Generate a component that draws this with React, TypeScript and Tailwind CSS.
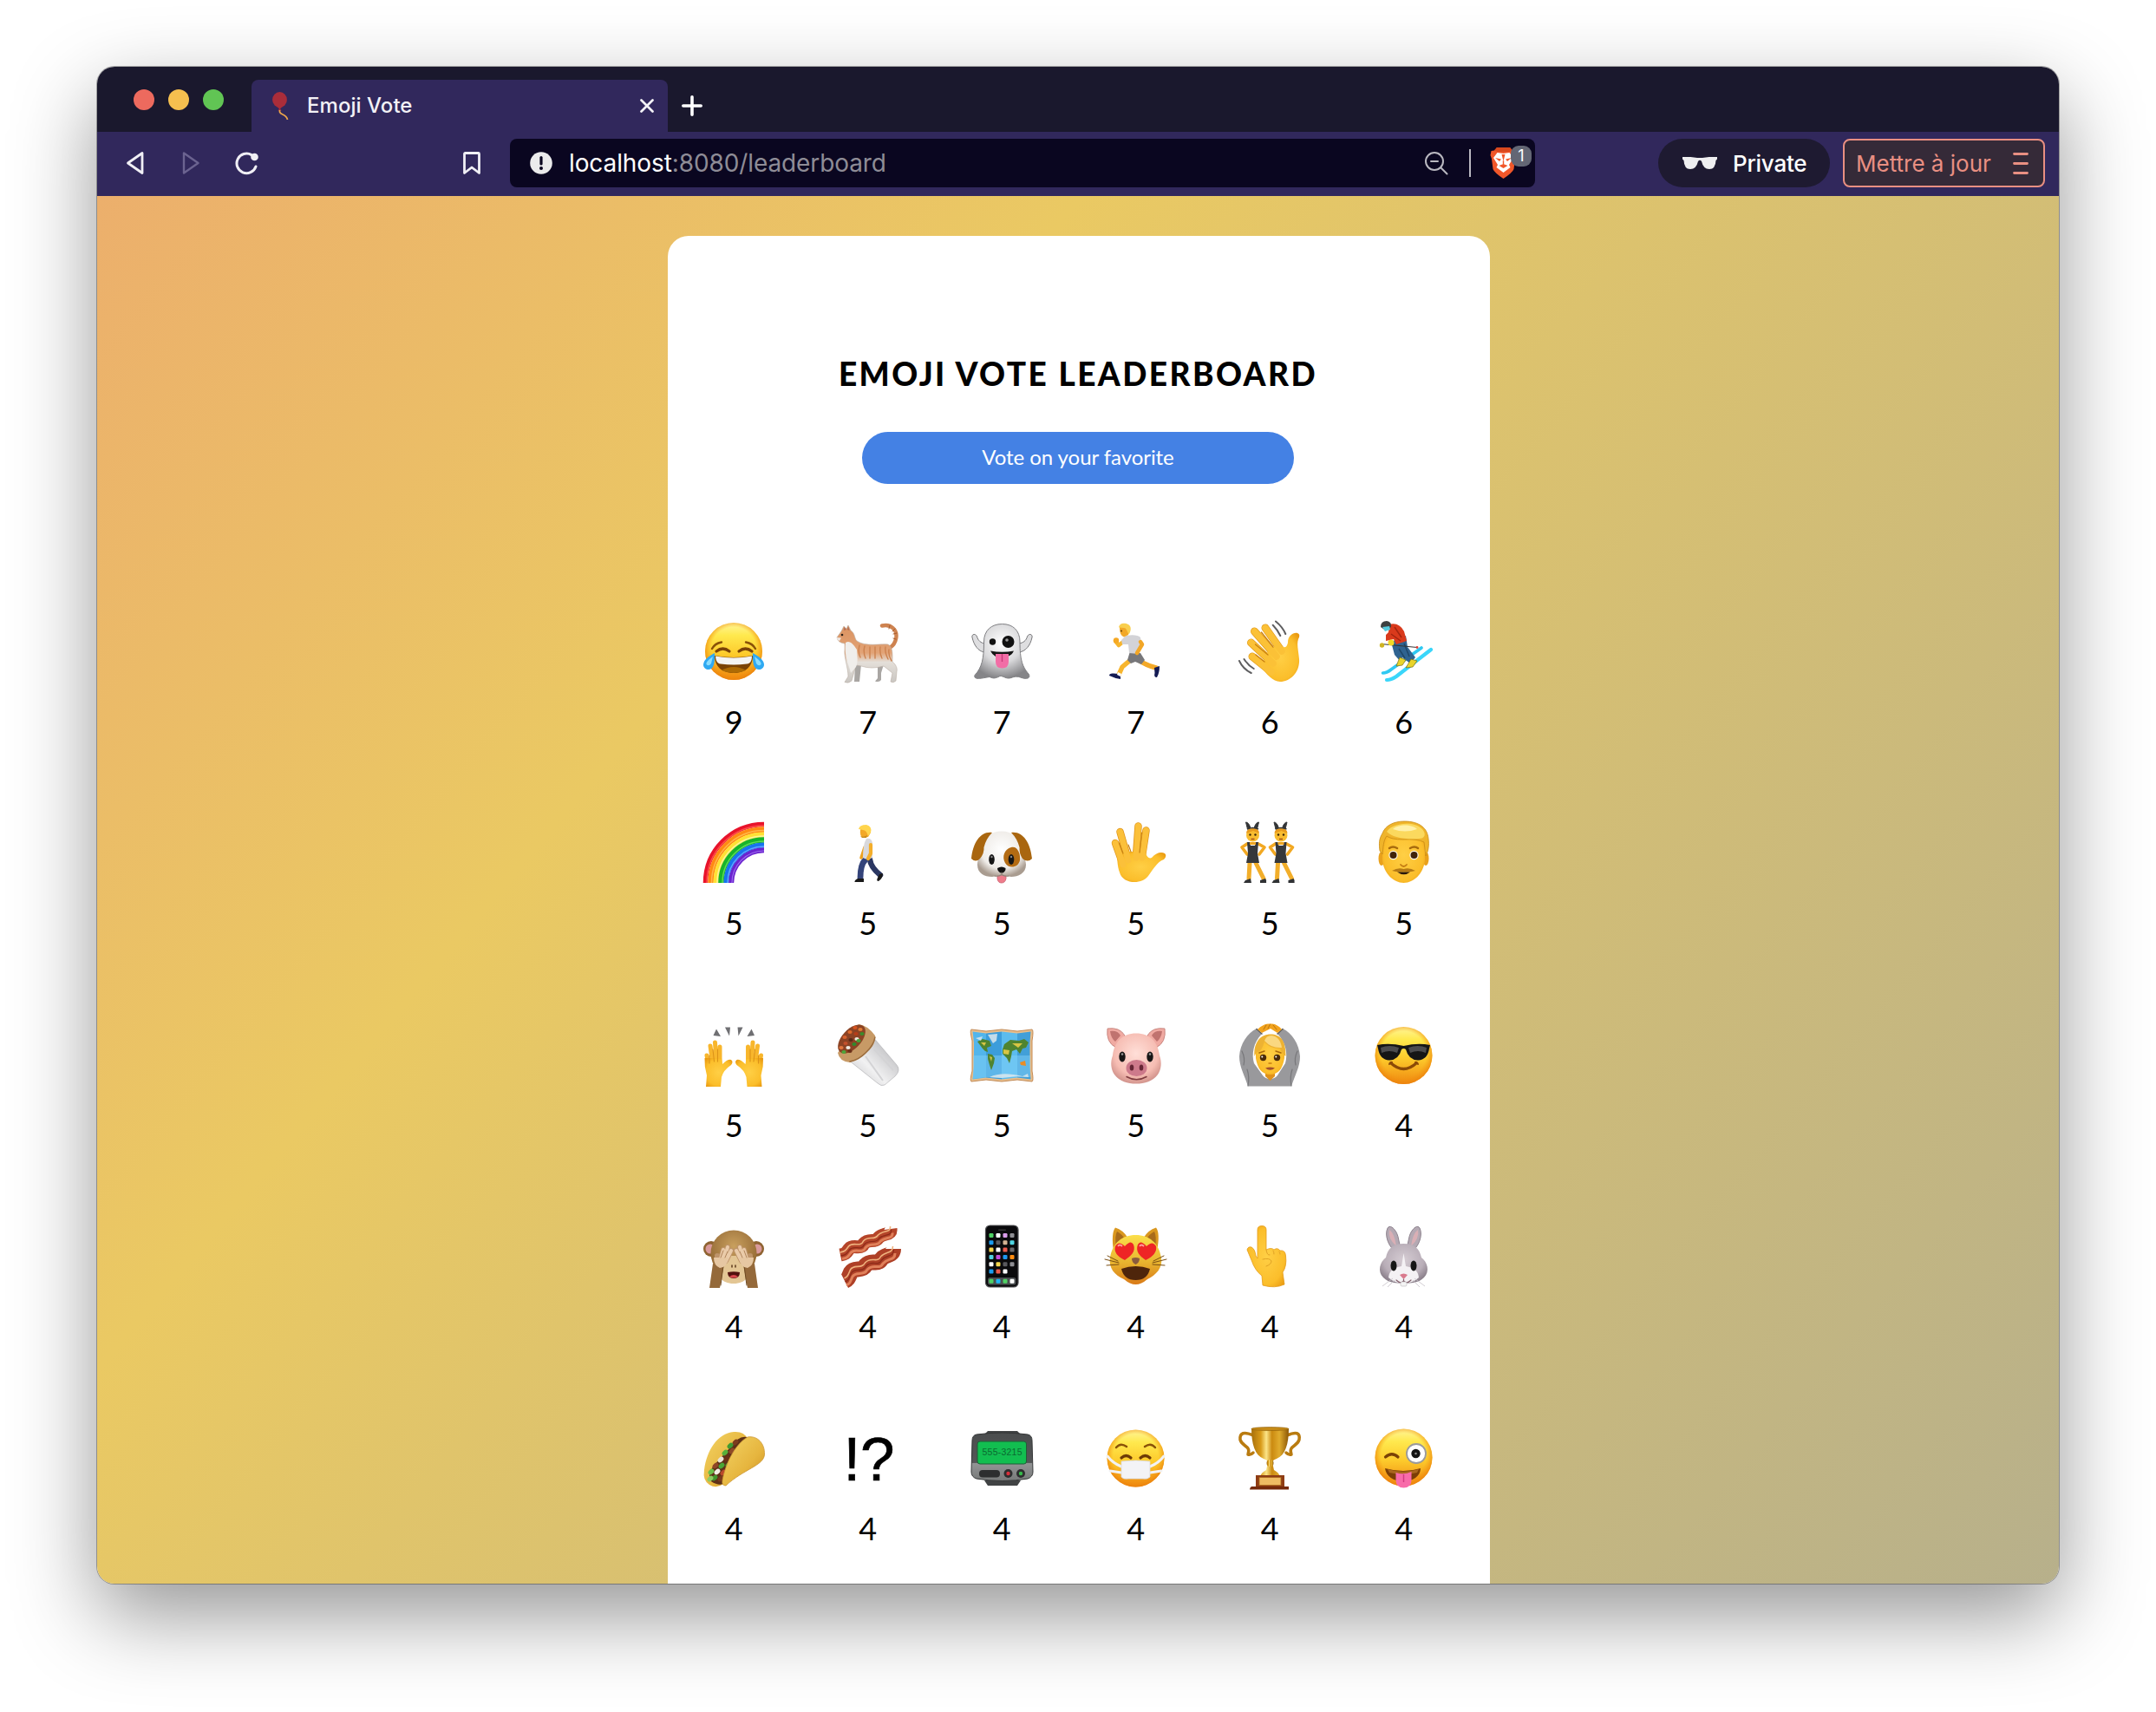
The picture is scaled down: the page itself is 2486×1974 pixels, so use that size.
import React from "react";

function SharedDefs() {
  return (
    <svg className="absolute h-0 w-0" aria-hidden="true">
      <defs>
        <linearGradient id="face" x1="0" y1="0" x2="0" y2="1">
          <stop offset="0" stopColor="#FFF59A" />
          <stop offset=".22" stopColor="#FFE94E" />
          <stop offset=".55" stopColor="#FDCB2C" />
          <stop offset="1" stopColor="#EF870F" />
        </linearGradient>
        <radialGradient id="rim" cx=".5" cy=".47" r=".53">
          <stop offset=".74" stopColor="#F59B13" stopOpacity="0" />
          <stop offset="1" stopColor="#EC820C" stopOpacity=".9" />
        </radialGradient>
        <radialGradient id="skin" cx=".5" cy=".5" r=".65">
          <stop offset="0" stopColor="#FFCF45" />
          <stop offset=".7" stopColor="#FBBE2B" />
          <stop offset="1" stopColor="#E9980F" />
        </radialGradient>
        <radialGradient id="ghost" cx=".5" cy=".35" r=".65">
          <stop offset="0" stopColor="#FFFFFF" />
          <stop offset=".55" stopColor="#DADADC" />
          <stop offset="1" stopColor="#858588" />
        </radialGradient>
        <radialGradient id="dog" cx=".5" cy=".4" r=".6">
          <stop offset="0" stopColor="#FFFFFF" />
          <stop offset=".7" stopColor="#EFECE8" />
          <stop offset="1" stopColor="#A99C90" />
        </radialGradient>
        <radialGradient id="pig" cx=".5" cy=".4" r=".62">
          <stop offset="0" stopColor="#FFDFD8" />
          <stop offset=".7" stopColor="#F6BDB3" />
          <stop offset="1" stopColor="#D0918A" />
        </radialGradient>
        <radialGradient id="rabbit" cx=".5" cy=".4" r=".6">
          <stop offset="0" stopColor="#D5CCD3" />
          <stop offset=".7" stopColor="#B9AEB8" />
          <stop offset="1" stopColor="#8D828D" />
        </radialGradient>
        <radialGradient id="fur" cx=".5" cy=".35" r=".65">
          <stop offset="0" stopColor="#C9A05E" />
          <stop offset="1" stopColor="#8F6431" />
        </radialGradient>
        <linearGradient id="gold" x1="0" y1="0" x2="1" y2="0">
          <stop offset="0" stopColor="#A8700C" />
          <stop offset=".25" stopColor="#D89A18" />
          <stop offset=".4" stopColor="#FCE588" />
          <stop offset=".55" stopColor="#CB8A10" />
          <stop offset=".75" stopColor="#E0AC2E" />
          <stop offset="1" stopColor="#8B5606" />
        </linearGradient>
        <linearGradient id="cat" x1="0" y1="0" x2="0" y2="1">
          <stop offset="0" stopColor="#DB9360" />
          <stop offset=".48" stopColor="#E2A376" />
          <stop offset=".64" stopColor="#E4DFD9" />
          <stop offset="1" stopColor="#C9C6C2" />
        </linearGradient>
        <linearGradient id="foil" x1="0" y1="1" x2="1" y2="0">
          <stop offset="0" stopColor="#BDBDBF" />
          <stop offset=".4" stopColor="#F1F1F2" />
          <stop offset="1" stopColor="#A9A9AC" />
        </linearGradient>
        <linearGradient id="taco" x1="0" y1="0" x2="1" y2="1">
          <stop offset="0" stopColor="#F3D465" />
          <stop offset=".6" stopColor="#E6B53E" />
          <stop offset="1" stopColor="#C98C1E" />
        </linearGradient>
        <linearGradient id="catface" x1="0" y1="0" x2="0" y2="1">
          <stop offset="0" stopColor="#FBDF4A" />
          <stop offset=".55" stopColor="#E8B42F" />
          <stop offset="1" stopColor="#D97A17" />
        </linearGradient>
        <linearGradient id="pager" x1="0" y1="0" x2="0" y2="1">
          <stop offset="0" stopColor="#4B4D4E" />
          <stop offset=".62" stopColor="#545657" />
          <stop offset=".64" stopColor="#929495" />
          <stop offset="1" stopColor="#777979" />
        </linearGradient>
      </defs>
    </svg>
  );
}

const FaceBase = ({ cx = 36, cy = 36 }: { cx?: number; cy?: number }) => (
  <>
    <circle cx={cx} cy={cy} r="33" fill="url(#face)" />
    <circle cx={cx} cy={cy} r="33" fill="url(#rim)" />
  </>
);

const line = { fill: "none", strokeLinecap: "round" as const, strokeLinejoin: "round" as const };

const Joy = () => (
  <>
    <FaceBase />
    <g {...line} stroke="#7A4206" strokeWidth="2.4">
      <path d="M11 33Q14 27 22 25.500M61 33Q58 27 50 25.500" stroke="#8A5208" />
      <path d="M16 36Q23.500 30 31 36M42 36Q49.500 30 57 36" strokeWidth="3.200" />
    </g>
    <path d="M14 41Q36 45 58 41C58 54 49 61 36 61S14 54 14 41Z" fill="#7B4305" />
    <path d="M15 41.500Q36 45.500 57 41.500Q57 50 51 50.500Q36 52.500 21 50.500Q15.500 50 15 41.500Z" fill="#F4F4F4" />
    <path d="M22 58Q36 50 50 58Q36 64 22 58Z" fill="#AD6B05" />
    <path d="M14 38C8 41 1 46 1 51.500C1 55 4 57 7 57C13 57 14.500 49 14 38ZM58 38C64 41 71 46 71 51.500C71 55 68 57 65 57C59 57 57.500 49 58 38Z" fill="#2FA9F2" />
    <path d="M12 42C8 45 4 48 4.500 51Q7 54 10 50ZM60 42C64 45 68 48 67.500 51Q65 54 62 50Z" fill="#8BDDFD" />
  </>
);

const Cat = () => (
  <g transform="translate(-1 1)">
    <path {...line} d="M63 31C71 26 73 14 67 8.500Q62 3.500 54 5.500" stroke="#CE8350" strokeWidth="4.400" />
    <path {...line} d="M71 14l-4 1M69 9l-3 3M63 5l-1 4M70 21l-3-1" stroke="#A95E30" strokeWidth="1" />
    <path d="M49 50L56 50L53 60L53 68Q51 71 46 69.500L49 66ZM23 50L30 50L28 70L22 70Z" fill="#A9A6A3" />
    <path d="M2 19L7 12L10 6L13 9L15 5L18 11C23 14 22 20 25 23C35 30 52 26 61 27C67 30 66 40 66 47C70 50 72 55 71 58L70 69Q67 72 64 70L66 60L56 52Q42 56 30 52L24 51L19 69Q15 72.500 11 70.500L15 64C15 54 10 42 11 33L11 26Q3 25 2 19Z" fill="url(#cat)" stroke="#B9ADA3" strokeWidth=".6" />
    <path d="M12 25C17 22 21 27 25 33C26 42 26 49 24 53L18 60C16 50 10 41 12 25Z" fill="#F0EEEB" />
    <path {...line} d="M28 28Q26 36 29 42M34 29Q32 36 35 43M40 30L40 43M46 30L46 43M52 30Q51 37 54 43M58 30Q57 36 61 44M62 33Q61 40 65 46" stroke="#CC824F" strokeWidth="1.400" />
    <circle cx="8" cy="16" r="1.300" fill="#2b2119" />
    <path d="M2 19L7 19.500L5 23Q2 22 2 19Z" fill="#EFE8E2" />
    <path d="M10 11L10.500 7L13 10ZM14 10L15 6L16.500 11Z" fill="#B06D58" />
  </g>
);

const Ghost = () => (
  <>
    <path d="M16 37C9 36 4 29 2 20C1 16 6 15 7.500 19C9 24 12 26 16 27ZM56 37C64 36 69 29 71 20C72 16 67 15 65.500 19C64 24 61 26 56 27Z" fill="#DEDEE0" stroke="#77777a" strokeWidth="1" />
    <path d="M15.500 25C15.500 12 24 4.500 36.500 4.500S57 12 57 25C57 46 60 54 67 62C70 67 65 68.500 59 66.500C54 64.500 51 65 47 66.500C41 68.500 38 64 34 64.500C27 68.500 25 66.500 22 65.500C15 66.500 3 70 5 63.500C13 55 15.500 45 15.500 25Z" fill="url(#ghost)" stroke="#808083" strokeWidth="1" />
    <circle cx="25.500" cy="25" r="3.700" fill="#111" />
    <circle cx="43.500" cy="25" r="7" fill="#111" />
    <circle cx="42" cy="23" r="1.800" fill="#999" />
    <path d="M23 35.500Q36.500 38 50 35.500Q48 40 43 42H29Q25 40 23 35.500Z" fill="#151515" />
    <path d="M29 39H44V48Q44 55.500 36.500 55.500T29 48Z" fill="#F26DA6" />
    <path d="M36.500 39V48" stroke="#C93C79" strokeWidth="1.400" />
  </>
);

const Runner = () => (
  <>
    <path {...line} d="M40 46Q48 52 60 55" stroke="#F3A928" strokeWidth="5.500" />
    <path d="M58 55L64 53Q64 61 61 66Q57 66 58.500 61Z" fill="#141B54" />
    <path {...line} d="M33 44L21 54L17 63" stroke="#F7B52D" strokeWidth="5.500" />
    <path d="M17 62L19 64L19 68Q12 67 6 64Q6 61 11 61.500Z" fill="#141B54" />
    <path d="M16 60l4 2-1 3-4-2Z" fill="#fff" />
    <path d="M30 36L42 38L47 46L43 51L36 48L31 50L27 46Z" fill="#77777A" />
    <path {...line} d="M22 25L17 29L13 24" stroke="#F7B52D" strokeWidth="4.500" />
    <circle cx="14" cy="23.500" r="3.200" fill="#F5A824" />
    <path d="M25 18Q38 16 42 20L43 27L40 39L29 38L28 28L21 28L20 23Z" fill="#D3D3D7" />
    <path {...line} d="M42 25L44 28L38 38" stroke="#F2A626" strokeWidth="4.500" />
    <path d="M18 9Q18 4 25 4.500Q30 6 29 13L28 17L23 19.500Q18 18 18 9Z" fill="#F2A827" />
    <path d="M17 8.500C18 3 24 3 28 5C32 7 31 13 29 16C26 14 27 9.500 23 9Z" fill="#F9CF4E" />
    <circle cx="20" cy="12.500" r=".9" fill="#5b3508" />
  </>
);

const Wave = () => (
  <>
    <g {...line} stroke="#E39C1D" strokeWidth="9">
      <path d="M31 9L50 36M18.500 13L44 42M14.500 26L40 50M16 42L36 58" />
    </g>
    <path d="M34 36L46 27Q55 36 57 26C57 18 63 14 68 15Q72 16 69 22C67 28 69 34 70 45C71 60 60 71 48 71C40 71 32 62 26 54Z" fill="url(#skin)" />
    <g {...line} stroke="#FBC137" strokeWidth="7.500">
      <path d="M31 9L50 36M18.500 13L44 42M14.500 26L40 50M16 42L38 60" />
    </g>
    <path {...line} d="M26.500 14L40 31M19.500 28L34 40M20 40L30 48" stroke="#C88112" strokeWidth="1.300" />
    <path {...line} d="M39.700 5.700Q45 11 48.300 18M43 1.500Q51 8 54.300 16M1 47Q5 56 14.700 61M6.500 45Q11 52 17.700 56" stroke="#5E5E60" strokeWidth="2" />
  </>
);

const Skier = () => (
  <>
    <g {...line} stroke="#2FC9F2" strokeWidth="3.600">
      <path d="M12.500 61Q17 61 22 57L57 32" />
      <path d="M17 69Q22 69 28 65L68 34" stroke="#3AD6FA" strokeWidth="4.200" />
    </g>
    <path d="M22 25L39 18L41 31L50 43L44 50L35 43L33 48L26 40Z" fill="#2F6390" />
    <path d="M31 33L38 44M37 27L43 42" stroke="#1F4769" strokeWidth="1.500" />
    <path d="M20 5Q31 2 37 13L40 24L28 28L25 22L16 24L16 17L19 14Z" fill="#D93A1C" />
    <path d="M26 8L34 20M22 16L33 24" stroke="#A32510" strokeWidth="1.500" />
    <path d="M10.500 27.500L52 31.500" stroke="#333" strokeWidth="1" />
    <circle cx="52" cy="31.500" r="1.400" fill="#DD3D35" />
    <path d="M32 43l7 3-4 6-7 1ZM45 45l7 2-5 7-8 1Z" fill="#E9D42B" stroke="#7c6d10" strokeWidth=".7" />
    <circle cx="11.500" cy="29" r="2.700" fill="#CFB422" />
    <circle cx="22" cy="26" r="3.500" fill="#F2D925" />
    <path d="M10 8Q10 1 17 1Q23 2 22 8L16 12Z" fill="#3C4040" />
    <path d="M12 8L20 7L21 11L15 13Z" fill="#54CCE0" />
  </>
);

const Rainbow = () => (
  <g fill="none">
    {[
      ["#E8132B", 67.500, 5.500],
      ["#FF4B45", 66, 1.500],
      ["#FF8A12", 61.500, 6.500],
      ["#FFB84A", 60.500, 1.500],
      ["#FFE135", 55.500, 6],
      ["#FFF59A", 54, 1.500],
      ["#18B42A", 49.500, 6.500],
      ["#5EDB54", 48, 1.500],
      ["#1774EE", 43.500, 6],
      ["#5FA6FF", 42, 1.500],
      ["#6A23CF", 37.800, 6],
      ["#9D6BEE", 37, 1.200],
    ].map(([c, r, w]) => (
      <path key={String(r)} d={`M${71 - Number(r)} 71A${r} ${r} 0 0 1 71 ${71 - Number(r)}`} stroke={String(c)} strokeWidth={Number(w)} />
    ))}
  </g>
);

const Walker = () => (
  <>
    <path {...line} d="M39 44Q40 53 51 62" stroke="#2B3762" strokeWidth="6.500" />
    <path d="M50 61L54 60Q54 66 49 69Q46 69 48 65Z" fill="#191919" />
    <path {...line} d="M34 44Q28 50 28 65" stroke="#34447A" strokeWidth="6.800" />
    <path d="M25 66H32V70H21.500Q21 68 25 66Z" fill="#191919" />
    <path {...line} d="M33 30L29 42" stroke="#EDA11F" strokeWidth="3.500" />
    <path d="M35 20Q41 19 42 25L42 42Q36 45 31 42Q31 26 35 20Z" fill="#D9D9DC" />
    <path {...line} d="M40 27L40 37L37 43" stroke="#F4AE2A" strokeWidth="4.200" />
    <path d="M28 10Q29 5 35 5Q40 7 40 13L37 18L31 19Q27 17 28 10Z" fill="#F2A827" />
    <path d="M26 9Q27 4 35 4Q42 6 40 13L37 17Q35 10 31 10Z" fill="#FFD54D" />
    <path d="M28 17Q32 19 36 16L35 19H30Z" fill="#C58A1C" />
  </>
);

const Dog = () => (
  <>
    <path d="M31 60H41V66Q40 71 35.800 71T31 66Z" fill="#EE7C8B" stroke="#C95D6C" strokeWidth=".8" />
    <path d="M36 11.500C49 11.500 56 19 56 32C57 38 64 41 64 50C64 60 55 64 47 64L36 62L25 64C16 64 8 60 8 50C8 41 14 38 15 31C16 18 23 11.500 36 11.500Z" fill="url(#dog)" />
    <path d="M25 13C12 11 3 24 1 43Q6 48 11 43Q16 37 15.500 30Q18 20 25 13ZM47 13C60 11 69 24 71 43Q66 48 60 43Q56 37 56.500 30Q54 20 47 13Z" fill="#A9660F" />
    <path d="M47 30C54 28 58 37 57 45C55 54 44 55 40 48C36 41 39 32 47 30Z" fill="#B36B13" />
    <ellipse cx="24.500" cy="44" rx="3.300" ry="6" fill="#161616" />
    <ellipse cx="47" cy="44" rx="3.300" ry="6" fill="#161616" />
    <circle cx="24.500" cy="41" r="1.200" fill="#888" />
    <circle cx="47" cy="41" r="1.200" fill="#888" />
    <path d="M31 54Q36 51 40.500 54Q41 58 36 60Q31 58 31 54Z" fill="#111" />
    <path {...line} d="M36 59V62M28 63Q32 64 36 61.500Q40 64 44 63" stroke="#8e8177" strokeWidth="1.100" />
  </>
);

const Vulcan = () => (
  <>
    <g {...line} stroke="#E0951A" strokeWidth="8.500">
      <path d="M13 25L22 50M18.500 12L28 45M39.500 5.500L37 40M48.500 10.500L44 40" />
    </g>
    <path d="M14 36L31 35L48 36Q50 44 55 42C60 36 66 35 70 37Q73 40 69 44C61 47 57 55 51 63C44 73 22 73 18 59C15 51 16 45 14 36Z" fill="url(#skin)" />
    <g {...line} stroke="#FBC03A" strokeWidth="7">
      <path d="M13 25L22 50M18.500 12L28 45M39.500 5.500L37 42M48.500 10.500L44 42" />
    </g>
    <path {...line} d="M17.500 25L22 37M43.500 13L41 36M31 35L28 27" stroke="#C98313" strokeWidth="1.200" />
  </>
);

const BunnyFigure = ({ x }: { x: number }) => (
  <g transform={`translate(${x} 0)`}>
    <path d="M8.500 1Q12 1 14 8L10.500 9ZM23.500 1Q20 1 18 8L21.500 9Z" fill="#333537" stroke="#333537" strokeWidth="1" />
    <g {...line} stroke="#F2A822" strokeWidth="3.600">
      <path d="M10 26L4 30L10 38M23 26L30 30L24 38" />
    </g>
    <path {...line} d="M13 48L12 66M20 48L29 66" stroke="#F2AE2A" strokeWidth="5" />
    <path d="M8 68L14 66L15 71H6ZM25 68L31 66Q33 68 32 71H25Z" fill="#303234" />
    <path d="M10 24L13 24L14 28H19L20 24L23 24L22 37L24 48H9L11 37Z" fill="#36383B" />
    <path d="M13 24H20V27H13Z" fill="#EDA520" />
    <circle cx="16.500" cy="16" r="7.500" fill="#F8BC30" />
    <path d="M9 14Q9 8 16.500 8T24 14L17 11Z" fill="#E99B1D" />
    <path d="M10 9Q16.500 6 23 9" stroke="#333537" strokeWidth="1.600" fill="none" />
    <circle cx="13.500" cy="15.500" r="1.200" fill="#3c2508" />
    <circle cx="19.500" cy="15.500" r="1.200" fill="#3c2508" />
    <path d="M14.500 20.500h4" stroke="#A44E17" strokeWidth="1.500" />
  </g>
);

const BunnyPeople = () => (
  <>
    <BunnyFigure x={0} />
    <BunnyFigure x={32.500} />
  </>
);

const Man = () => (
  <>
    <ellipse cx="11" cy="43" rx="3.500" ry="8" fill="#E9A11C" />
    <ellipse cx="62" cy="43" rx="3.500" ry="8" fill="#E9A11C" />
    <path d="M12 26Q12 6 36.500 6T61 26V43C61 57 50 71 36.500 71S12 57 12 43Z" fill="url(#skin)" />
    <path d="M9 34C8 26 8 20 12 14C15 5 25 0 37 0C55 0 64 8 65 20C66 28 65 34 62 40L60 24Q52 20 36 21Q22 21 17 17C13 22 13 30 12 38Z" fill="#EFB42B" stroke="#C98A14" strokeWidth=".8" />
    <path d="M17 12C23 2 48 -1 58 9C63 15 61 20 54 20C38 21 24 19 17 12Z" fill="#FBD95E" />
    <path d="M24 9C30 3 46 3 52 9Q38 14 24 9Z" fill="#FFF0A8" />
    <path {...line} d="M20 31Q24 28 29 31M44 31Q49 28 53 31" stroke="#A86B0D" strokeWidth="2.500" />
    <circle cx="24.500" cy="39" r="5.200" fill="#FDF7E8" />
    <circle cx="48.500" cy="39" r="5.200" fill="#FDF7E8" />
    <circle cx="24.500" cy="39" r="4" fill="#402309" />
    <circle cx="48.500" cy="39" r="4" fill="#402309" />
    <path {...line} d="M33 50Q36.500 54 40 50" stroke="#C47B12" strokeWidth="1.800" />
    <path d="M23 57Q30 53 36.500 55Q43 53 50 57Q43 59 36.500 58Q30 59 23 57Z" fill="#B57A15" />
    <path d="M29 58.500H44Q37 64 29 58.500Z" fill="#29170B" />
  </>
);

const RaisedHand = () => (
  <>
    <g {...line} stroke="#F8B62C" strokeWidth="5">
      <path d="M5 37L8 52M9 26L12 48M14.500 22L16 46M20 27L20 46" />
    </g>
    <path d="M2.500 40Q2 50 5 60L4 73H21L22 62Q24 54 33 48Q36 44 33 42Q29 41 23 47L22 40Z" fill="url(#skin)" />
    <path {...line} d="M8 37V46M12 30L13.500 44M17.500 30V44" stroke="#DC9318" strokeWidth="1.100" />
    <path d="M12.500 14L16 6.500L21 15ZM26 4.500L32 4.500L31 14.500Z" fill="#6F6F72" />
  </>
);

const RaisedHands = () => (
  <>
    <RaisedHand />
    <g transform="translate(72.500 0) scale(-1 1)">
      <RaisedHand />
    </g>
  </>
);

const Burrito = () => (
  <>
    <path d="M42 15L70 48Q75 54 68 61L56 71Q52 73 48 69L14 42Z" fill="url(#foil)" stroke="#B5B5B8" strokeWidth=".7" />
    <path d="M44 30L66 54M34 38L54 66" stroke="#D3D3D5" strokeWidth="2" />
    <path d="M26 1Q36 2 45 14Q46 24 37 32Q27 43 16 45Q4 44 2 34Z" fill="#C79A66" />
    <path {...line} d="M45 16Q43 26 34 34Q26 42 16 44" stroke="#9A6C3D" strokeWidth="1.400" />
    <ellipse cx="18" cy="18" rx="11" ry="20" transform="rotate(43 18 18)" fill="#8B4324" />
    {[
      [22, 5, "#D4531F"], [28, 7, "#E07A35"], [16, 10, "#E06A2B"], [23, 12, "#B53E19"], [10, 16, "#D9622D"],
      [30, 12, "#3B8A2A"], [24, 18, "#EFE8DF"], [17, 19, "#5B2A17"], [11, 23, "#C3502B"], [21, 24, "#2F8B2D"],
      [6, 28, "#E2763D"], [14, 28, "#F1EBE2"], [9, 33, "#4DA53A"], [16, 32, "#6A2F18"], [26, 20, "#44A338"],
    ].map(([x, y, c], i) => (
      <ellipse key={i} cx={Number(x)} cy={Number(y)} rx="2.600" ry="2" fill={String(c)} />
    ))}
  </>
);

const WorldMap = () => (
  <>
    <path d="M1 7L18 9L36 7L54 9L71 7Q73 8 71 20L71 55Q73 66 71 67L54 65L36 67L18 65L1 67Q-1 66 2 55L2 20Q-1 8 1 7Z" fill="#E8BE8C" stroke="#C28A55" strokeWidth="1" />
    <path d="M2.500 9.500L18 11.500V62.500L2.500 64.500L4 50V22Z" fill="#52B5EB" />
    <path d="M18 11.500L36 9.500V64.500L18 62.500Z" fill="#3C9DDB" />
    <path d="M36 9.500L54 11.500V62.500L36 64.500Z" fill="#5CBCEE" />
    <path d="M54 11.500L69.500 9.500L68.500 22V50L69.500 64.500L54 62.500Z" fill="#429FD8" />
    <path d="M3 37L69 37V62L54 62L36 63L18 62L3 64Z" fill="#7FD0F7" opacity=".5" />
    <path d="M8 21L14 18L22 20L24 26L19 28L20 33L17 32L14 29L11 25ZM20 35L25 36L28 40L27 46L24 54L22 48L20 41ZM39 24L46 19L56 20L62 18L67 22L64 28L60 29L57 35L53 30L48 32L47 38L45 46L42 40L37 35L37 30Z" fill="#4F8430" />
    <path d="M38 30L45 31L44 36L38 35ZM48 23L60 23L55 28ZM12 22L18 22L16 26ZM22 38l3 1-1 5Z" fill="#D8C544" />
    <path d="M57 45L63 43L64 49L58 48Z" fill="#E98D26" />
    <path d="M20 13L31 12L30 20L26 23ZM6 17L14 15L12 20ZM22 62Q36 55 60 61L66 58L67 62L54 61L36 63Z" fill="#DCE8EC" opacity=".85" />
  </>
);

const Pig = () => (
  <>
    <path d="M4 6Q18 4 24 14L14 28Q2 22 4 6ZM70 6Q56 4 50 14L60 28Q72 22 70 6Z" fill="#F0AAA2" stroke="#C98780" strokeWidth="1" />
    <path d="M7 9Q16 8 19 14L13 21Q8 17 7 9ZM67 9Q58 8 55 14L61 21Q66 17 67 9Z" fill="#C0736F" />
    <path d="M37 11.500C53 11.500 62 21 64 37C67 45 66 53 62 59C56 67 47 69.500 37 69.500S18 67 12 59C8 53 7 45 10 37C12 21 21 11.500 37 11.500Z" fill="url(#pig)" />
    <ellipse cx="21" cy="38.500" rx="3.700" ry="6" fill="#181616" />
    <ellipse cx="53" cy="38.500" rx="3.700" ry="6" fill="#181616" />
    <circle cx="21" cy="35.500" r="1.300" fill="#999" />
    <circle cx="53" cy="35.500" r="1.300" fill="#999" />
    <ellipse cx="37.500" cy="51.500" rx="12" ry="9.500" fill="#CD7A8B" />
    <ellipse cx="32" cy="51" rx="2.300" ry="3.500" fill="#652635" />
    <ellipse cx="43" cy="51" rx="2.300" ry="3.500" fill="#652635" />
    <path {...line} d="M26 61.500Q37.500 68 49 61.500" stroke="#7E3B3E" strokeWidth="1.500" />
  </>
);

const OkPerson = () => (
  <>
    <path d="M36.500 64Q31 64 28 60L18 46C15 36 17 22 27 12L21 6C10 11 2 24 1 38C1 50 7 60 11 72.500H61C65 60 71 50 71 38C70 24 62 11 51 6L45 12C55 22 57 36 54 46L45 60Q42 64 36.500 64Z" fill="#99999C" />
    <path {...line} d="M11 72Q13 62 10 53M61 72Q59 62 62 53M4 32Q8 40 6 48M68 32Q64 40 66 48" stroke="#77777A" strokeWidth="1.200" />
    <path {...line} d="M21 6.500L27 12M51 6.500L45 12" stroke="#5E5E61" strokeWidth="1.600" />
    <path d="M22 7Q28 1 34 .5L39 .5Q45 1 50 7L45 11L37 6L27 11Z" fill="#F2A31D" />
    <path {...line} d="M36.500 1L34 6M40 2L44 7M32 2L29 7" stroke="#B97510" strokeWidth="1" />
    <path d="M31 54H42V61L36.500 66L31 61Z" fill="#E0921A" />
    <path d="M20 32Q20 13 37 13T53 32V40Q50 59 36.500 59T20 40Z" fill="url(#skin)" />
    <path d="M18.500 38C17 22 26 12.500 37 12.500S55 20 54.500 38C52 36 50 34 48 29C40 29 33 26 30 21Q27 32 22 33Q19 35 18.500 38Z" fill="#EDB232" />
    <path d="M30 20Q32 14 38 14Q48 15 50 28Q38 29 30 20Z" fill="#FAD880" />
    <circle cx="28.500" cy="39.500" r="3.700" fill="#4A2B0A" />
    <circle cx="44.500" cy="39.500" r="3.700" fill="#4A2B0A" />
    <circle cx="27.300" cy="38.500" r="1" fill="#fff" />
    <circle cx="43.300" cy="38.500" r="1" fill="#fff" />
    <path {...line} d="M24 34L30 32M43 32L49 34" stroke="#A9690D" strokeWidth="1.500" />
    <path d="M34.500 46H38.500" stroke="#C77E10" strokeWidth="1.500" />
    <path d="M31 51.500Q36.500 49.500 42 51.500Q36.500 56 31 51.500Z" fill="#A3502B" />
  </>
);

const Sunglasses = () => (
  <>
    <FaceBase cx={36.500} cy={37} />
    <path d="M6 25Q20 22 36.500 26Q53 22 67 25L66 29Q64 42 53 42.500Q42 42 39 30Q36.500 28 34 30Q31 42 20 42.500Q9 42 7 29Z" fill="#161616" />
    <path d="M10 28Q20 24 31 28L29 34Q20 30 11 34ZM42 28Q53 24 63 28L62 34Q53 30 44 34Z" fill="#4c4c4e" />
    <path {...line} d="M22 46Q36.500 59 51 46" stroke="#8C4A07" strokeWidth="3.200" />
    <path {...line} d="M20 47Q21 44 23 45M53 47Q52 44 50 45" stroke="#8C4A07" strokeWidth="2" />
  </>
);

const Monkey = () => (
  <>
    <circle cx="10" cy="28" r="9" fill="#8F6331" />
    <circle cx="62" cy="28" r="9" fill="#8F6331" />
    <circle cx="9" cy="28" r="5.500" fill="#D99A9C" />
    <circle cx="63" cy="28" r="5.500" fill="#D99A9C" />
    <circle cx="36" cy="33" r="26.500" fill="url(#fur)" />
    <path d="M36 68C22 68 15 58 17 49C18 41 24 38 29 36H43C48 38 54 41 55 49C57 58 50 68 36 68Z" fill="#E3C694" />
    <path d="M29 55Q36 53.500 43 55Q43 62 36 62T29 55Z" fill="#54120F" />
    <path d="M31 60Q36 56 41 60Q36 63 31 60Z" fill="#D9484C" />
    <path {...line} d="M34 47v2M38 47v2" stroke="#5D3A1D" strokeWidth="1.500" />
    <path d="M12 45L25 46L20 73H8ZM60 45L47 46L52 73H64Z" fill="#94693A" />
    <path {...line} d="M24 47L21 70M48 47L51 70" stroke="#6F4A22" strokeWidth="1" />
    <path {...line} d="M20 43L24 29M24 43L29 26M17 42L17 36M27 42L33 30M52 43L48 29M48 43L43 26M55 42L55 36M45 42L39 30" stroke="#BE946A" strokeWidth="6" />
    <path {...line} d="M20 43L24 29M24 43L29 26M27 42L33 30M52 43L48 29M48 43L43 26M45 42L39 30" stroke="#EACBA9" strokeWidth="4" />
    <path d="M13 38L30 38Q28 50 20 50Q13 47 13 38ZM59 38L42 38Q44 50 52 50Q59 47 59 38Z" fill="#E6C7A2" />
    <path {...line} d="M21 38L24 30M26 38L29 31M51 38L48 30M46 38L43 31" stroke="#AF835A" strokeWidth="1" />
  </>
);

const Bacon = () => {
  const upper = "M63 5C64 13 55 9 49 15C45 22 38 15 32 22C29 30 20 22 15 28C11 34 10 34 5 35";
  const lower = "M66 28C66 37 58 33 52 40C48 48 41 39 34 47C30 55 21 48 17 55C14 62 14 63 10 65";
  return (
    <g {...line} strokeLinecap="butt">
      <path d={upper} stroke="#B5452A" strokeWidth="15" />
      <path d={lower} stroke="#AE4027" strokeWidth="18" />
      <g stroke="#E0805A" strokeWidth="3">
        <path d={upper} transform="translate(2 4.500)" />
        <path d={lower} transform="translate(2 5)" />
      </g>
      <g stroke="#EFB27E" strokeWidth="1.600">
        <path d={upper} transform="translate(-.5 -3)" />
        <path d={lower} transform="translate(-.5 -3)" />
      </g>
      <g stroke="#8C2A18" strokeWidth="1.200">
        <path d={upper} transform="translate(.5 1)" />
        <path d={lower} transform="translate(.5 1)" />
      </g>
    </g>
  );
};

const appColors = [
  "#4FD264", "#FFFFFF", "#D99BEA", "#8E8E93", "#1A9CF0", "#5A5A5E", "#D3B394", "#4FD6E4", "#F7D84E", "#FFFFFF", "#EA5B4D",
  "#6A6A6E", "#52D1E0", "#C24FDD", "#1E98F0", "#FF8C12", "#FFFFFF", "#F7D84E", "#5A5A5E", "#8E8E93", "#1A9CF0", "#EA5B4D", "#FFFFFF",
];

const Phone = () => (
  <>
    <rect x="17.500" y="1" width="37.500" height="71" rx="5" fill="#0A0A0C" stroke="#4E4F52" strokeWidth="1.200" />
    <rect x="20" y="61" width="32.500" height="8.500" rx="2.500" fill="#4A4E50" />
    <rect x="32" y="5.500" width="9" height="1.500" rx=".7" fill="#333" />
    {appColors.map((c, i) => (
      <rect key={i} x={21.500 + (i % 4) * 8} y={10 + Math.floor(i / 4) * 8.300} width="5" height="5" rx="1.200" fill={c} />
    ))}
    {["#4FD264", "#1FB6F5", "#4FD264", "#FFFFFF"].map((c, i) => (
      <rect key={i} x={21.500 + i * 8} y="62.800" width="5" height="5" rx="1.200" fill={c} />
    ))}
  </>
);

const HeartCat = () => (
  <>
    <path d="M11 30Q8 10 13 3.500Q22 6 28 16ZM61 30Q65 10 60 3.500Q51 6 45 16Z" fill="#D9971F" />
    <path d="M14 25Q12 14 15 8Q21 11 24 17ZM59 25Q61 14 58 8Q52 11 49 17Z" fill="#A86B1B" />
    <path d="M36.500 12C52 12 63 21 66 38C68 50 60 58 50 63Q43 69 36.500 69Q30 69 23 63C12 58 5 50 7 38C10 21 21 12 36.500 12Z" fill="url(#catface)" />
    <path {...line} d="M1 40L17 44M3 47L17 46M72 40L56 44M70 47L56 46M4 36L16 42M69 36L57 42" stroke="#7A4D12" strokeWidth="1" />
    <path d="M20 51Q36.500 45 53 51Q50 64 36.500 64T20 51Z" fill="#4E250B" />
    <path d="M32 39Q36.500 37 41 39Q41 44 36.500 46Q32 44 32 39Z" fill="#8A5B3E" />
    <path d="M24 41Q10 34 13 25Q17 18 24 25Q31 17 34 23C37 31 31 36 24 41ZM48 41Q62 34 60 25Q56 18 49 25Q42 17 39 23C36 31 41 36 48 41Z" fill="#EE2525" />
    <path d="M16 25q2-3 5 0M41 25q2-3 5 0" stroke="#FFA0A0" strokeWidth="1.800" fill="none" />
  </>
);

const PointUp = () => (
  <>
    <path d="M22 6Q22 1.500 27 1.500T32 6L32 29Q38 26 41 29Q45 26 48 30Q54 29 54.500 36Q56 48 51 55L53 69Q42 74 28 70L27 59Q19 53 15 41L10 29Q11 25 15 26Q19 28 20 36L22 39Z" fill="url(#skin)" stroke="#E39B18" strokeWidth=".8" />
    <path {...line} d="M32 29Q33 36 36 35M41 34Q41 31 40 30M48 34Q48 32 47 31M28 40Q36 38 38 42Q38 46 32 48" stroke="#E0A226" strokeWidth="1" />
  </>
);

const Rabbit = () => (
  <>
    <path d="M29 32C19 27 14 12 18 4C21 -1 28 6 30 14L33 28ZM44 32C54 27 59 12 55 4C52 -1 45 6 43 14L40 28Z" fill="#B4A9B3" stroke="#8D838E" strokeWidth="1" />
    <path d="M28 25Q18 16 20 6Q26 10 28 25ZM45 25Q55 16 53 6Q47 10 45 25Z" fill="#D9AFB5" />
    <path d="M36.500 22C49 22 55 28 57 38C64 43 67 54 60 61C53 68 45 67 36.500 68C28 67 20 68 13 61C6 54 9 43 16 38C18 28 24 22 36.500 22Z" fill="url(#rabbit)" />
    <path d="M36.500 33L39 48Q53 50 54 61Q48 67 36.500 68Q25 67 19 61Q20 50 34 48Z" fill="#F4F1F4" />
    <ellipse cx="25" cy="47.500" rx="3.500" ry="6" fill="#161616" />
    <ellipse cx="48" cy="47.500" rx="3.500" ry="6" fill="#161616" />
    <path d="M32 58Q36.500 55 41 58L36.500 63Z" fill="#D9798D" />
    <path {...line} d="M36.500 63V66M28 64Q33 69 36.500 65Q40 69 45 64" stroke="#85646f" strokeWidth="1.200" />
    <rect x="33" y="66" width="7" height="5" rx="1.500" fill="#F4F4F4" stroke="#BBB5BB" strokeWidth=".6" />
    <path d="M24 62L12 71M26 64L18 72M49 62L61 71M47 64L55 72" stroke="#C8C1C8" strokeWidth=".8" />
  </>
);

const Taco = () => (
  <>
    <path d="M36 6Q48 5 52 14L24 66Q16 72 8 67Q0 62 2 50C5 27 17 8 36 6Z" fill="url(#taco)" />
    <path d="M40 15Q50 8 56 16L28 64Q20 70 10 63Q5 58 12 46Z" fill="#5E3118" />
    {[
      [38, 18, "#7C3C1E"], [32, 22, "#3F9A31"], [34, 28, "#8E4A27"], [26, 30, "#58AE3A"], [28, 37, "#6B2F16"], [21, 38, "#EAE3D7"],
      [22, 45, "#4BA636"], [15, 45, "#8F4526"], [17, 52, "#F2EEE6"], [10, 52, "#6BC04A"], [14, 59, "#41952E"], [21, 60, "#7A3A1D"],
      [9, 60, "#8DCB62"], [30, 44, "#47A035"], [24, 53, "#B9492B"],
    ].map(([x, y, c], i) => (
      <ellipse key={i} cx={Number(x)} cy={Number(y)} rx="3.800" ry="2.700" fill={String(c)} transform={`rotate(-40 ${x} ${y})`} />
    ))}
    <path d="M52 12C63 10 72 19 71.500 32C71 45 47 49 27 68Q22 68 23 62C27 41 38 20 52 12Z" fill="url(#taco)" stroke="#CC9530" strokeWidth=".8" />
  </>
);

const Pager = () => (
  <>
    <path d="M16 9L20 5H54L58 9ZM16 62L20 68H54L58 62Z" fill="#414344" />
    <path d="M7 9Q37 5 66 9Q71 10 71 16L72 52Q72 58 66 60Q37 65 7 60Q1 58 1 52L2 16Q2 10 7 9Z" fill="url(#pager)" stroke="#343637" strokeWidth="1" />
    <rect x="8" y="17" width="56.500" height="26" rx="3" fill="#12BE50" stroke="#1F5F36" strokeWidth="1" />
    <text x="36.500" y="33" textAnchor="middle" fontSize="10.500" fontFamily="Liberation Sans, sans-serif" fill="#0B6A30" textLength="46">555-3215</text>
    <rect x="10" y="50" width="24" height="8.500" rx="4" fill="#2D2E2F" />
    <circle cx="43.500" cy="54" r="5" fill="#2D2E2F" />
    <circle cx="58" cy="54" r="5" fill="#2D2E2F" />
    <circle cx="43.500" cy="54" r="2.200" fill="#D9303B" />
    <circle cx="58" cy="54" r="2.200" fill="#36B94A" />
  </>
);

const Mask = () => (
  <>
    <FaceBase cx={36.500} cy={36.500} />
    <path {...line} d="M14 24Q19 18 26 23M47 23Q54 18 59 24" stroke="#8A5208" strokeWidth="2.500" />
    <path {...line} d="M20 36Q25.500 31 31 36M42 36Q47.500 31 53 36" stroke="#6E3B06" strokeWidth="3.200" />
    <path {...line} d="M4 34Q10 42 20 46M69 34Q63 42 53 46M7 51L20 53M66 51L53 53" stroke="#F2F2F4" strokeWidth="3" />
    <path d="M20 40Q36.500 38 53 40V58Q50 61 45 60H28Q22 61 20 58Z" fill="#F3F3F6" stroke="#D9D9DE" strokeWidth=".8" />
  </>
);

const Trophy = () => (
  <>
    <path {...line} d="M17 10Q1 3 2 15C4 23 15 22 11 32M56 10Q72 3 70 15C68 23 57 22 61 32M11 32Q14 33 17 30M61 32Q58 33 55 30" stroke="#B97B10" strokeWidth="3.500" />
    <path d="M15 2H58C58 20 54 33 44 37Q40 38 39 41L41 50Q47 53 48 58H25Q26 53 32 50L34 41Q33 38 29 37C19 33 15 20 15 2Z" fill="url(#gold)" />
    <ellipse cx="36.500" cy="2.500" rx="21.500" ry="2" fill="#C68B18" stroke="#8B5A06" strokeWidth=".6" />
    <circle cx="36.500" cy="42" r="4" fill="url(#gold)" />
    <path d="M20 56H53V69H20Z" fill="#8E3C14" />
    <path d="M15 69H58V72.500H13Q13 70 15 69Z" fill="#75290A" />
    <rect x="24" y="58.500" width="25" height="9" fill="#EFBC63" stroke="#A9651B" strokeWidth=".8" />
  </>
);

const WinkTongue = () => (
  <>
    <FaceBase cx={36.500} cy={35.500} />
    <circle cx="51" cy="31" r="11" fill="#fff" stroke="#9A9A9C" strokeWidth="1.800" />
    <circle cx="50.500" cy="31" r="5.200" fill="#141414" />
    <circle cx="50.500" cy="31" r="1.300" fill="#8B8B8B" />
    <path {...line} d="M15.500 35Q23 28.500 30 35" stroke="#7A4206" strokeWidth="3.200" />
    <path d="M15 48Q36.500 54 56 48C56 57 47 63 36 63S16 57 15 48Z" fill="#7B3E06" />
    <path d="M18 49Q36.500 54.500 54 49L52 53Q36.500 57 20 53Z" fill="#A8651F" />
    <path d="M27.500 53Q36.500 56 45.500 52V62Q45 70.500 36.500 70.500T27.500 62Z" fill="#F86BA9" />
    <path d="M36.500 55V64" stroke="#D23C81" strokeWidth="1.400" />
  </>
);

const Interrobang = () => (
  <text x="38" y="62" textAnchor="middle" fontSize="71" fontFamily="Liberation Sans, Arial, sans-serif" fill="#000" stroke="#000" strokeWidth=".7">
    !?
  </text>
);

const entries: { name: string; votes: number; Art: () => React.ReactElement }[] = [
  { name: "joy", votes: 9, Art: Joy },
  { name: "cat", votes: 7, Art: Cat },
  { name: "ghost", votes: 7, Art: Ghost },
  { name: "running", votes: 7, Art: Runner },
  { name: "wave", votes: 6, Art: Wave },
  { name: "skier", votes: 6, Art: Skier },
  { name: "rainbow", votes: 5, Art: Rainbow },
  { name: "walking", votes: 5, Art: Walker },
  { name: "dog", votes: 5, Art: Dog },
  { name: "vulcan", votes: 5, Art: Vulcan },
  { name: "dancers", votes: 5, Art: BunnyPeople },
  { name: "man", votes: 5, Art: Man },
  { name: "raised hands", votes: 5, Art: RaisedHands },
  { name: "burrito", votes: 5, Art: Burrito },
  { name: "world map", votes: 5, Art: WorldMap },
  { name: "pig", votes: 5, Art: Pig },
  { name: "ok person", votes: 5, Art: OkPerson },
  { name: "sunglasses", votes: 4, Art: Sunglasses },
  { name: "see no evil", votes: 4, Art: Monkey },
  { name: "bacon", votes: 4, Art: Bacon },
  { name: "phone", votes: 4, Art: Phone },
  { name: "heart eyes cat", votes: 4, Art: HeartCat },
  { name: "point up", votes: 4, Art: PointUp },
  { name: "rabbit", votes: 4, Art: Rabbit },
  { name: "taco", votes: 4, Art: Taco },
  { name: "interrobang", votes: 4, Art: Interrobang },
  { name: "pager", votes: 4, Art: Pager },
  { name: "mask", votes: 4, Art: Mask },
  { name: "trophy", votes: 4, Art: Trophy },
  { name: "wink", votes: 4, Art: WinkTongue },
];

function TabStrip() {
  return (
    <div className="flex h-[75px] shrink-0 bg-[#1A182D]">
      <div className="flex w-[178px] shrink-0 items-center gap-4 pl-[42px]">
        <span className="size-6 rounded-full bg-[#ED6A5E]" />
        <span className="size-6 rounded-full bg-[#F5BF4F]" />
        <span className="size-6 rounded-full bg-[#61C554]" />
      </div>
      <div className="mt-[15px] flex h-[60px] w-[480px] items-center rounded-t-lg bg-[#31285C] pr-4 pl-6">
        <svg className="h-8 w-[20px] shrink-0" viewBox="0 0 20 32">
          <ellipse cx="8.500" cy="9" rx="8.400" ry="9" fill="#AA2D3A" />
          <path d="M2.500 14L8.500 20L14.500 14Z" fill="#AA2D3A" />
          <path d="M6.500 21.500L8.500 18.500L10.500 21.500Z" fill="#AA2D3A" />
          <path d="M8.500 21V23C9.500 27 16 25 17.500 32" fill="none" stroke="#EDA64A" strokeWidth="1.800" />
        </svg>
        <span className="ml-[20px] grow text-[24px] font-medium tracking-[0.050px] text-[#F2F1F6]">Emoji Vote</span>
        <svg className="size-4" viewBox="0 0 16 16" fill="none" stroke="#F3F2F7" strokeWidth="2.700" strokeLinecap="round">
          <path d="M1.500 1.500L14.500 14.500M14.500 1.500L1.500 14.500" />
        </svg>
      </div>
      <div className="mt-[15px] flex h-[60px] items-center pl-4">
        <svg className="size-6" viewBox="0 0 24 24" fill="none" stroke="#FFFFFF" strokeWidth="3.600" strokeLinecap="round">
          <path d="M12 1.800V22.200M1.800 12H22.200" />
        </svg>
      </div>
    </div>
  );
}

function Toolbar() {
  return (
    <div className="flex h-[74px] shrink-0 items-center bg-[#31285C] pb-0.5 pl-[33px]">
      <svg className="h-7 w-[22px] shrink-0" viewBox="0 0 22 28" fill="none" stroke="#F0EFF5" strokeWidth="2.800" strokeLinejoin="round">
        <path d="M19 2.500V25.500L2.500 14Z" />
      </svg>
      <svg className="ml-[43px] h-7 w-[22px] shrink-0" viewBox="0 0 22 28" fill="none" stroke="#6B6390" strokeWidth="2.400" strokeLinejoin="round">
        <path d="M2 2.500V25.500L18.500 14Z" />
      </svg>
      <svg className="ml-[38px] size-7 shrink-0" viewBox="0 0 28 28" fill="none" stroke="#F0EFF5" strokeWidth="3" strokeLinecap="round">
        <path d="M20 4.600A11.300 11.300 0 1 0 25 18" />
        <circle cx="23.500" cy="7" r="4.300" fill="#F0EFF5" stroke="none" />
      </svg>
      <svg className="ml-[235px] h-7 w-[22px] shrink-0" viewBox="0 0 22 28" fill="none" stroke="#F0EFF5" strokeWidth="2.800" strokeLinejoin="round">
        <path d="M2.500 3.500Q2.500 2.500 3.500 2.500H18.500Q19.500 2.500 19.500 3.500V25.500L11 19L2.500 25.500Z" />
      </svg>
      <div className="ml-[33px] flex h-14 w-[1182px] shrink-0 items-center rounded-lg bg-[#0A0620] pr-[2px] pl-[23px]">
        <svg className="size-[26px]" viewBox="0 0 26 26">
          <circle cx="13" cy="13" r="12.800" fill="#EBEBEC" />
          <path d="M13 6.500V14" stroke="#0A0620" strokeWidth="3.200" strokeLinecap="round" />
          <circle cx="13" cy="19" r="2" fill="#0A0620" />
        </svg>
        <span className="ml-[19px] grow text-[28px] tracking-[-0.1px] text-[#8E8C96]">
          <span className="text-white">localhost</span>:8080/leaderboard
        </span>
        <svg className="size-7" viewBox="0 0 28 28" fill="none" stroke="#B9B8C0" strokeWidth="2" strokeLinecap="round">
          <circle cx="12" cy="12" r="10" />
          <path d="M8 12H16M19.500 19.500L26.500 26.500" />
        </svg>
        <span className="ml-[24px] h-8 w-0.5 bg-[#B9B8C0]" />
        <div className="relative ml-[22px] h-10 w-[50px]">
          <svg className="absolute top-0.5 left-0 h-9 w-[31px]" viewBox="0 0 31 36">
            <path d="M8 0H23L26 3.500L29.500 4L30.500 9L29 13L27.500 25Q26 29 15.500 36Q5 29 3.500 25L2 13L.5 9L1.500 4L5 3.500Z" fill="#F0572A" />
            <path d="M8 0H23L26 3.500L22 5H9L5 3.500Z" fill="#D9481E" />
            <path d="M8.500 6L15.500 7L22.500 6L27 12L22 20L23.500 23L15.500 29L7.500 23L9 20L4 12Z" fill="#fff" />
            <path d="M6 12L13 13.500L11 16ZM25 12L18 13.500L20 16ZM13.500 8L15.500 16L17.500 8ZM10.500 21L15.500 19L20.500 21L15.500 24ZM14.800 15H16.200V20H14.800Z" fill="#F0572A" />
          </svg>
          <span className="absolute top-0 left-[24px] flex size-6 items-center justify-center rounded-[9px] bg-[#636674] text-[18px] leading-none text-white">1</span>
        </div>
      </div>
      <div className="ml-[142px] flex h-14 w-[198px] shrink-0 items-center rounded-full bg-[#1E1A31] pl-7">
        <svg className="h-[14px] w-10" viewBox="0 0 40 14">
          <path d="M0 0Q10 -.5 17 1H23Q30 -.5 40 0V2.500L38.500 4Q38 14 31 14Q24 14 22 5Q20 2.500 18 5Q16 14 9 14Q2 14 1.500 4L0 2.500Z" fill="#EFEFF1" />
        </svg>
        <span className="ml-[18px] text-[26px] font-medium tracking-[-0.25px] text-white">Private</span>
      </div>
      <div className="ml-[15px] flex h-14 w-[233px] shrink-0 items-center rounded-lg border-2 border-[#E98F82] bg-[#352A38] pl-[13px]">
        <span className="w-[181px] text-[26px] whitespace-nowrap text-[#E98F82]">Mettre à jour</span>
        <svg className="h-[25px] w-[18px]" viewBox="0 0 18 25" stroke="#E98F82" strokeWidth="2.800" strokeLinecap="round">
          <path d="M1.500 1.500H16.500M1.500 12.500H16.500M1.500 23.500H16.500" />
        </svg>
      </div>
    </div>
  );
}

export default function App() {
  return (
    <div className="flex h-[1974px] w-[2486px] justify-center overflow-hidden bg-white pt-[77px] font-['Inter',sans-serif]">
      <SharedDefs />
      <div className="flex h-[1749px] w-[2262px] flex-col overflow-hidden rounded-[20px] shadow-[0_0_0_1px_rgba(0,0,0,0.3),0_36px_96px_rgba(0,0,0,0.42)]">
        <TabStrip />
        <Toolbar />
        <main className="flex grow justify-center overflow-hidden bg-[linear-gradient(130deg,#ECAF6C_0%,#EAC963_31.5%,#B7B08B_100%)] pt-[46px]">
          <section className="mr-[-2px] flex h-[1700px] w-[948px] flex-col items-center rounded-t-[24px] bg-white font-['Lato',sans-serif]">
            <h1 className="mt-[137px] mr-[2px] text-[37px] leading-[44px] font-black tracking-[2.440px] whitespace-nowrap text-black">
              EMOJI VOTE LEADERBOARD
            </h1>
            <button className="mt-[45px] mr-[2px] flex h-[60px] w-[498px] items-center justify-center rounded-full bg-[#4481E4] pb-[2px] text-[24px] tracking-[-0.050px] text-white">
              Vote on your favorite
            </button>
            <div className="mt-[157px] -ml-[23px] grid auto-rows-[232.4px] grid-cols-[repeat(6,154.5px)]">
              {entries.map(({ name, votes, Art }) => (
                <div key={name} className="flex flex-col items-center">
                  <svg className="mr-[1.500px] size-[72px] overflow-visible" viewBox="0 0 72 72" role="img" aria-label={name}>
                    <Art />
                  </svg>
                  <span className="mt-[23px] text-[36px] leading-[44px] text-black">{votes}</span>
                </div>
              ))}
            </div>
          </section>
        </main>
      </div>
    </div>
  );
}
